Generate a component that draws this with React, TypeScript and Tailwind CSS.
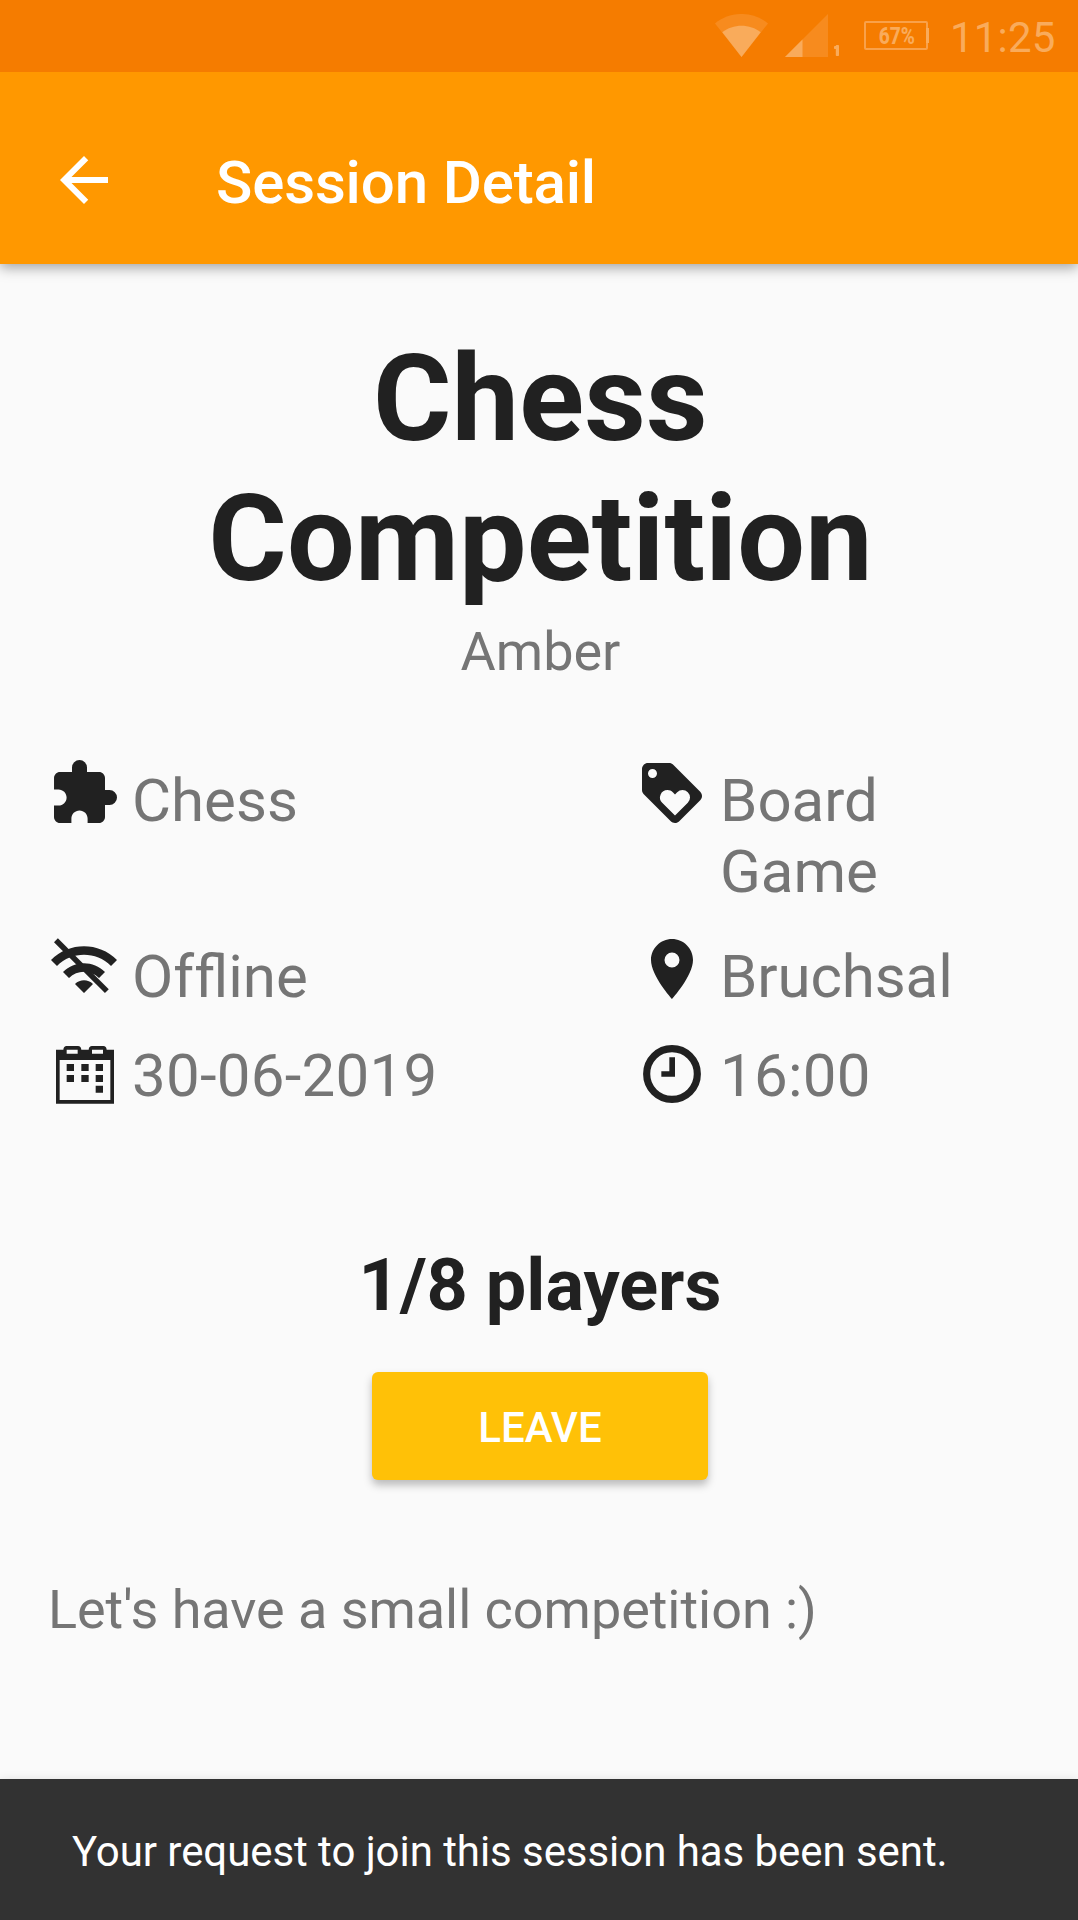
import type { ReactNode } from "react";
import { MdArrowBack, MdExtension, MdLocationOn, MdLoyalty } from "react-icons/md";

function StatusBar() {
  return (
    <div className="relative z-20 flex h-[72px] shrink-0 items-start bg-[#f57c00] text-[#f9ab5b]">
      <svg className="mt-[14px] ml-[715px] h-[43px] w-[53px] shrink-0" viewBox="0 0 53 43">
        <path d="M26.5 43L0 9.5C15-3.2 38-3.2 53 9.5z" fill="#f78b1e" />
        <path d="M26.5 43L7.3 18.300C18 9.400 35 9.400 45.700 18.300z" fill="#f9ab5b" />
      </svg>
      <svg className="mt-[14px] ml-[17px] h-[43px] w-[43px] shrink-0" viewBox="0 0 43 43">
        <path d="M0 43L43 0V43z" fill="#f78b1e" />
        <path d="M0 43L17.500 25.500V43z" fill="#f9ab5b" />
      </svg>
      <svg className="mt-[45px] ml-[6px] h-[11px] w-[5px] shrink-0" viewBox="0 0 5 11" fill="currentColor">
        <rect x="1.800" width="3.200" height="11" rx="0.800" />
        <rect y="1" width="3" height="3" rx="0.800" />
      </svg>
      <div className="relative mt-[21px] ml-[25px] flex h-[29px] w-[64px] shrink-0 items-center justify-center rounded-[2px] border-2 border-[#f9a14a]">
        <span className="mt-[3px] ml-0.5 scale-x-[.83] text-[23px] leading-[22px] font-extrabold">67%</span>
        <span className="absolute top-[5px] -right-[3px] h-[15px] w-[3px] bg-[#f9ab5b]" />
      </div>
      <span className="mt-[13px] ml-[22px] text-[42px] leading-[49px] tracking-[0.2px]">11:25</span>
    </div>
  );
}

function WifiOffIcon() {
  return (
    <svg className="size-[72px]" viewBox="0 0 24 24" fill="currentColor">
      <path d="M1 9l2 2c4.970-4.970 13.030-4.970 18 0l2-2C16.930 2.930 7.080 2.930 1 9zm8 8l3 3 3-3c-1.650-1.660-4.340-1.660-6 0zm-4-4l2 2c2.760-2.760 7.240-2.760 10 0l2-2C15.140 9.140 8.870 9.140 5 13z" />
      <path d="M2 3.050L3.290 1.790L20.250 18.740L18.980 20z" />
    </svg>
  );
}

function CalendarIcon() {
  return (
    <svg className="mt-0.5 ml-[2px] h-[58px] w-[58px]" viewBox="0 0 174 174" fill="currentColor">
      <path
        fillRule="evenodd"
        d="M0 11H22Q23 0 32 0H66Q75 0 76 11H98Q99 0 108 0H142Q151 0 152 11H174V173H0zM11 42V162H163V42zM32 11V23H65V11zM108 11V23H141V11z"
      />
      <path d="M32 54h22v21H32zM76 54h22v21H76zM119 54h22v21h-22zM32 87h22v21H32zM76 87h22v21H76zM119 87h22v21h-22zM119 119h22v21h-22z" />
    </svg>
  );
}

function ClockIcon() {
  return (
    <svg className="h-[58px] w-[58px]" viewBox="0 0 174 174" fill="currentColor">
      <circle cx="87" cy="87" r="76" fill="none" stroke="currentColor" strokeWidth="21.500" />
      <path d="M79 37h17v58H55V79h24z" />
    </svg>
  );
}

function Detail({ icon, className, children }: { icon: ReactNode; className: string; children: ReactNode }) {
  return (
    <div className="flex">
      <div className="flex size-[72px] shrink-0 items-center justify-center text-[72px] text-[#212121]">{icon}</div>
      <span className={`ml-3 text-[60px] leading-[71px] text-[#757575] ${className}`}>{children}</span>
    </div>
  );
}

export default function App() {
  return (
    <div className="flex h-[1920px] w-[1078px] flex-col overflow-hidden bg-[#fafafa] font-[Roboto,sans-serif]">
      <StatusBar />
      <header className="z-10 flex h-[192px] shrink-0 items-start bg-[#ff9800] px-12 pt-[72px] text-white shadow-[0_4px_12px_rgba(0,0,0,0.34)]">
        <MdArrowBack className="size-[72px]" />
        <h1 className="mt-[3px] ml-24 text-[60px] leading-[72px] font-medium tracking-[-0.15px]">Session Detail</h1>
      </header>

      <main className="flex w-[1080px] flex-1 flex-col pt-[65px]">
        <h2 className="mx-auto w-[800px] pl-px text-center text-[120px] leading-[140px] font-bold tracking-[0.2px] text-[#212121]">
          Chess Competition
        </h2>
        <p className="mt-[11px] pl-px text-center text-[54px] leading-[63px] text-[#757575]">Amber</p>

        <section className="mt-[74px] grid grid-cols-[588px_1fr] grid-rows-[176px_105px_73px] pl-12">
          <Detail icon={<MdExtension />} className="pt-2">Chess</Detail>
          <Detail icon={<MdLoyalty />} className="w-[200px] pt-2">Board Game</Detail>
          <Detail icon={<WifiOffIcon />} className="pt-2">{"Of\u200cfline"}</Detail>
          <Detail icon={<MdLocationOn />} className="pt-2 tracking-[-0.1px]">Bruchsal</Detail>
          <Detail icon={<CalendarIcon />} className="pt-0.5 tracking-[0.25px]">30-06-2019</Detail>
          <Detail icon={<ClockIcon />} className="pt-0.5 tracking-[0.25px]">16:00</Detail>
        </section>

        <p className="mt-[133px] text-center text-[72px] leading-[84px] font-bold text-[#212121]">1/8 players</p>
        <button className="mx-auto mt-[44px] h-[108px] w-[336px] rounded-[6px] bg-[#ffc107] pt-[3px] text-[42px] leading-[50px] font-medium text-white shadow-[0_5px_8px_rgba(0,0,0,0.26)]">
          LEAVE
        </button>
        <p className="mt-[98px] pl-12 text-[54px] leading-[63px] tracking-[-0.05px] text-[#757575]">
          Let's have a small competition :)
        </p>
      </main>

      <footer className="flex h-[141px] items-center bg-[#323232] pt-[3px] pl-[72px] text-[42px] leading-[49px] tracking-[-0.06px] text-white shadow-[0_2px_10px_rgba(0,0,0,0.14)]">
        Your request to join this session has been sent.
      </footer>
    </div>
  );
}
